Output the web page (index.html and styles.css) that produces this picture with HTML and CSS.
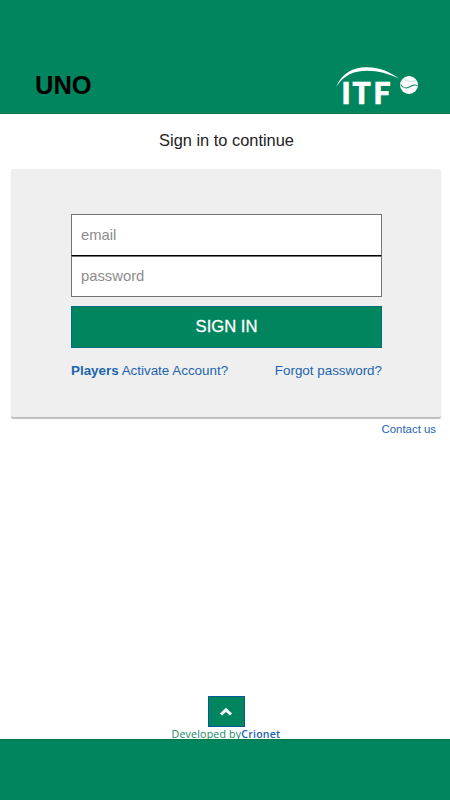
FILE: index.html
```
<!DOCTYPE html>
<html lang="en">
  <head>
    <meta charset="UTF-8" />
    <meta name="viewport" content="width=device-width, initial-scale=1.0" />
    <title>UNO</title>
    <link rel="stylesheet" href="styles.css">
  </head>
  <body>
    <header class="header">
      <h1 class="title">UNO</h1>
      <svg class="logo" viewBox="0 0 86 48" role="img" aria-label="ITF">
        <path d="M1 22C7 8 18 2.300 31 2.200C45 1.900 55 7 64 13.500C53 8.500 44 5.700 32 5.700C18 5.900 9 10 1 22Z" fill="#fff" />
        <text class="logo-text" x="6.500 17.500 38.500" y="38.500">ITF</text>
        <circle cx="74" cy="20" r="9" fill="#fff" />
        <path d="M65.500 19.500C68 23.500 72 23.500 75 21.800S79 19.500 82.500 20.500" fill="none" stroke="#1d8c6a" stroke-width="1.100" />
        <path d="M69 13.500C71 16.500 76 17 81.500 15.500" fill="none" stroke="#b5d9ce" stroke-width="0.800" />
      </svg>
    </header>

    <main class="main">
      <h2 class="subtitle">Sign in to continue</h2>
      <form class="login-box">
        <input class="field field-email" type="email" placeholder="email" />
        <input class="field" type="password" placeholder="password" />
        <button class="sign-in-btn" type="button">SIGN IN</button>
        <div class="links">
          <a href="#"><b>Players</b> Activate Account?</a>
          <a href="#">Forgot password?</a>
        </div>
      </form>
      <a class="contact" href="#">Contact us</a>
    </main>

    <div class="bottom">
      <a class="top-btn" href="#" aria-label="Back to top">
        <svg width="14" height="9" viewBox="0 0 14 9">
          <path d="M2 7.500L7 2.800L12 7.500" fill="none" stroke="#fff" stroke-width="3" />
        </svg>
      </a>
      <p class="credits">Developed by<a href="#">Crionet</a></p>
    </div>
    <footer class="footer"></footer>
  </body>
</html>
```
FILE: styles.css
```
* {
  box-sizing: border-box;
}

body {
  display: flex;
  flex-direction: column;
  height: 100vh;
  margin: 0;
  overflow: hidden;
  background-color: #fff;
  font-family: "Liberation Sans", Arial, sans-serif;
}

a {
  color: #1c64b0;
  text-decoration: none;
}

.header {
  display: flex;
  flex: none;
  justify-content: space-between;
  align-items: flex-start;
  height: 114px;
  padding: 65px 29px 0 35px;
  background-color: #00855f;
  border-bottom: 1px solid #007541;
}

.title {
  margin: 5px 0 0;
  color: #000;
  font-size: 25.5px;
  line-height: 30px;
}

.logo {
  width: 86px;
  height: 48px;
  overflow: visible;
}

.logo-text {
  fill: #fff;
  stroke: #fff;
  stroke-width: 0.7px;
  font-family: Lato, sans-serif;
  font-size: 30px;
  font-weight: 900;
}

.main {
  display: flex;
  flex-direction: column;
  padding: 15px 9px 0 11px;
}

.subtitle {
  margin: 0 0 18px;
  padding-left: 1px;
  color: #222;
  font-size: 16.4px;
  font-weight: normal;
  line-height: 22px;
  text-align: center;
}

.login-box {
  height: 248px;
  padding: 45px 59px 0 60px;
  background-color: #efefef;
  border-radius: 2px;
  box-shadow: 0 2px 1px rgba(0, 0, 0, 0.26);
}

.field {
  display: block;
  width: 100%;
  height: 41px;
  margin: 0;
  padding: 0 9px 1px;
  background-color: #fff;
  border: 1px solid #737373;
  border-radius: 0;
  font-family: inherit;
  font-size: 14.8px;
}

.field::placeholder {
  color: #8c8c8c;
}

.field-email {
  height: 42px;
  padding-bottom: 0;
  border-bottom-color: #000;
}

.sign-in-btn {
  display: block;
  width: 100%;
  height: 42px;
  margin: 9px 0 14px;
  padding: 0;
  background-color: #00855f;
  border: 1px solid #006d80;
  color: #fff;
  font-family: inherit;
  font-size: 16.6px;
  -webkit-text-stroke: 0.3px #fff;
}

.links {
  display: flex;
  justify-content: space-between;
  font-size: 13.4px;
  line-height: 18px;
  white-space: nowrap;
}

.contact {
  align-self: flex-end;
  margin: 5px 5px 0 0;
  font-size: 11.4px;
  line-height: 14px;
}

.bottom {
  display: flex;
  flex-direction: column;
  align-items: center;
  height: 43px;
  margin-top: auto;
  padding-left: 2px;
}

.top-btn {
  display: flex;
  flex: none;
  justify-content: center;
  align-items: center;
  width: 37px;
  height: 31px;
  background-color: #00855f;
  border: 1px solid #07599b;
}

.credits {
  margin: 0;
  color: #16855f;
  font-family: "Open Sans", sans-serif;
  font-size: 10.6px;
  letter-spacing: 0.2px;
  line-height: 14px;
}

.credits a {
  font-weight: 600;
}

/* sits over the lower edge of the credits line */
.footer {
  position: relative;
  flex: none;
  height: 61px;
  background-color: #00855f;
  border-top: 1px solid #007541;
}
```
